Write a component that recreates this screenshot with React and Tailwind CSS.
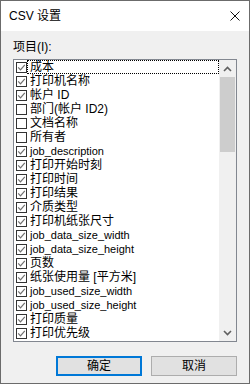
import { useState } from "react";

// Column list shown in the dialog
const initialItems = [
  { id: 1, label: "成本", checked: true },
  { id: 2, label: "打印机名称", checked: true },
  { id: 3, label: "帐户 ID", checked: true },
  { id: 4, label: "部门(帐户 ID2)", checked: false },
  { id: 5, label: "文档名称", checked: false },
  { id: 6, label: "所有者", checked: false },
  { id: 7, label: "job_description", checked: true },
  { id: 8, label: "打印开始时刻", checked: true },
  { id: 9, label: "打印时间", checked: true },
  { id: 10, label: "打印结果", checked: true },
  { id: 11, label: "介质类型", checked: true },
  { id: 12, label: "打印机纸张尺寸", checked: true },
  { id: 13, label: "job_data_size_width", checked: true },
  { id: 14, label: "job_data_size_height", checked: true },
  { id: 15, label: "页数", checked: true },
  { id: 16, label: "纸张使用量 [平方米]", checked: true },
  { id: 17, label: "job_used_size_width", checked: true },
  { id: 18, label: "job_used_size_height", checked: true },
  { id: 19, label: "打印质量", checked: true },
  { id: 20, label: "打印优先级", checked: true },
];

const Chevron = ({ down }) => (
  <svg width="9" height="6" viewBox="0 0 9 6" className={down ? "rotate-180" : ""}>
    <path d="M1 5 L4.5 1.5 L8 5" fill="none" stroke="#606060" strokeWidth="1.6" />
  </svg>
);

const CsvSettings = () => {
  const [items, setItems] = useState(initialItems);
  const [focused, setFocused] = useState(1);

  const toggle = (id) => {
    setFocused(id);
    setItems(items.map(i => i.id === id ? { ...i, checked: !i.checked } : i));
  };

  return (
    <div
      className="w-[251px] h-[388px] bg-white text-black text-[12px]"
      style={{ fontFamily: '"Liberation Sans", "Noto Sans CJK SC", sans-serif' }}
    >
      <div className="w-[250px] h-[384px] border border-[#6b6b6b] flex flex-col">
        {/* Title bar */}
        <div className="h-[30px] bg-white flex items-center justify-between pl-[8px] pr-[9px]">
          <span className="leading-[14px]">CSV 设置</span>
          <svg width="10" height="10" viewBox="0 0 10 10">
            <path d="M0.5 0.5 L9.5 9.5 M9.5 0.5 L0.5 9.5" stroke="#111" strokeWidth="1" />
          </svg>
        </div>

        {/* Body */}
        <div className="flex-1 bg-[#f0f0f0] px-[12px] pt-[9px] flex flex-col">
          <div className="leading-[14px] h-[14px]">项目(I):</div>

          {/* List box */}
          <div className="mt-[5px] h-[283px] border border-[#828790] bg-white flex">
            <div className="flex-1 flex flex-col">
              {items.map(item => (
                <div key={item.id} className="h-[14px] flex items-center pl-[2px] cursor-default" onClick={() => toggle(item.id)}>
                  <div className="w-[11px] h-[11px] border border-[#333] bg-white flex items-center justify-center shrink-0">
                    {item.checked && (
                      <svg width="9" height="9" viewBox="0 0 9 9">
                        <path d="M1.2 4.4 L3.5 6.8 L7.8 1.8" fill="none" stroke="#707070" strokeWidth="1.2" />
                      </svg>
                    )}
                  </div>
                  <div
                    className={`flex-1 h-[14px] pl-[2px] leading-[12px] whitespace-nowrap border border-dotted ${/^[\x00-\x7f]+$/.test(item.label) ? "text-[11px]" : "text-[12px]"} ${focused === item.id ? "border-black" : "border-transparent"}`}
                  >
                    {item.label}
                  </div>
                </div>
              ))}
            </div>

            {/* Scrollbar */}
            <div className="w-[17px] bg-[#f0f0f0] flex flex-col">
              <div className="h-[17px] flex items-center justify-center">
                <Chevron />
              </div>
              <div className="flex-1 flex flex-col">
                <div className="h-[75px] mx-[1px] bg-[#cdcdcd]" />
              </div>
              <div className="h-[17px] flex items-center justify-center">
                <Chevron down />
              </div>
            </div>
          </div>

          {/* Buttons */}
          <div className="mt-[14px] flex justify-end gap-[9px]">
            <button className="w-[86px] h-[20px] border-2 border-[#0078d7] bg-[#e1e1e1] leading-[14px]">确定</button>
            <button className="w-[86px] h-[20px] border border-[#adadad] bg-[#e1e1e1] leading-[14px]">取消</button>
          </div>
        </div>
      </div>
    </div>
  );
};

export default CsvSettings;
